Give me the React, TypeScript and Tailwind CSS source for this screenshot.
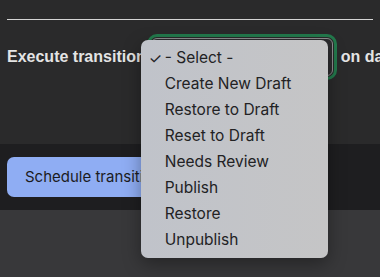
import React from "react";

const options = [
  "- Select -",
  "Create New Draft",
  "Restore to Draft",
  "Reset to Draft",
  "Needs Review",
  "Publish",
  "Restore",
  "Unpublish",
];

export default function App() {
  return (
    <div className="h-[277px] w-[380px] overflow-hidden flex flex-col bg-[#2a2a2b] font-['Inter','Liberation_Sans',sans-serif]">
      <div className="px-[7px] pt-[19px] h-[144px]">
        <div className="border-t border-[#d4d4d4]" />
        <div className="mt-[14px] flex items-center whitespace-nowrap text-[16px] font-bold text-[#e4e4e4] font-['Liberation_Sans',sans-serif]">
          <span className="mr-[1px]">Execute transition</span>
          <div className="relative shrink-0">
            <div className="w-[190px] h-[46px] rounded-[10px] border-[3px] border-[#23794c] p-px">
              <div className="h-full rounded-[6px] border border-[#8e8e90] bg-[#2c2c2e]" />
            </div>
            {/* native select popup, open */}
            <div className="absolute left-[-6px] top-[6px] w-[187px] py-[5px] rounded-[7px] bg-gradient-to-r from-[#c0c3ca] to-[#c5c5c6] shadow-[0_6px_18px_rgba(0,0,0,0.35)] font-normal text-[#222224] z-10 font-['Inter',sans-serif]">
              {options.map((o, i) => (
                <div key={o} className="h-[26px] flex items-center">
                  <span className="w-[24px] pl-[8px] text-[15px] leading-none">{i === 0 ? "✓" : ""}</span>
                  <span className="text-[15.5px] leading-none">{o}</span>
                </div>
              ))}
            </div>
          </div>
          <span className="ml-[4px]">on date</span>
        </div>
      </div>
      <div className="bg-[#1e1e20] px-[7px] py-[13px]">
        <button
          type="button"
          className="h-[40px] px-[18px] rounded-[7px] bg-[#8fadf3] text-[15px] text-[#1c1c1e] whitespace-nowrap"
        >
          Schedule transition
        </button>
      </div>
      <div className="flex-1 bg-[#38383a]" />
    </div>
  );
}
